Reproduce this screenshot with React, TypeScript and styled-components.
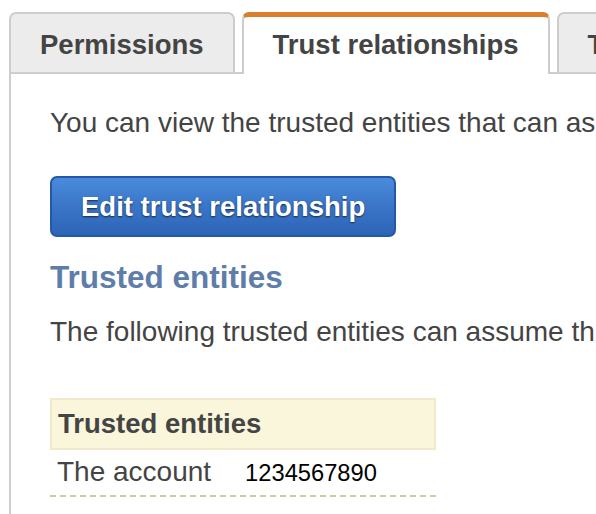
import React from 'react';
import styled, { createGlobalStyle, css } from 'styled-components';

const GlobalStyle = createGlobalStyle`
  html, body {
    margin: 0;
    padding: 0;
    background: #fff;
  }
  body {
    font-family: "Liberation Sans", Arial, Helvetica, sans-serif;
    color: #444;
  }
`;

const StyledPage = styled.div`
  display: flex;
  flex-direction: column;
  height: 100vh;
  padding: 12px 0 0 9px;
  box-sizing: border-box;
  overflow: hidden;
`;

const StyledTabBar = styled.div`
  display: flex;
  align-items: flex-start;
  gap: 7px;
  border-bottom: 2px solid #cdcdcd;
  white-space: nowrap;
`;

const StyledTab = styled.div<{ $active?: boolean }>`
  flex: none;
  box-sizing: border-box;
  height: 60px;
  padding: 17px 29px 0;
  border: 2px solid #cdcdcd;
  border-bottom: none;
  border-radius: 7px 7px 0 0;
  background: #ececec;
  font-size: 27.5px;
  line-height: 27.5px;
  font-weight: bold;
  color: #444;

  ${(props) => props.$active && css`
    position: relative;
    height: 62px;
    margin-bottom: -2px;
    padding-top: 14px;
    border-top: 5px solid #d97f2c;
    background: #fff;
  `}
`;

const StyledPanel = styled.div`
  flex: 1;
  border-left: 2px solid #cdcdcd;
  padding: 29px 0 0 39px;
  white-space: nowrap;
`;

const StyledText = styled.p<{ $gap?: number }>`
  margin: ${(props) => props.$gap ?? 0}px 0 0;
  font-size: 28px;
  line-height: 40px;
  color: #444;
`;

const StyledButton = styled.button`
  display: block;
  box-sizing: border-box;
  height: 61px;
  margin-top: 33px;
  padding: 0 29px;
  border: 2px solid #2459a8;
  border-radius: 7px;
  background: linear-gradient(to bottom, #4a8bdb 0%, #3a75c8 50%, #2d65b6 100%);
  font-family: "Liberation Sans", Arial, Helvetica, sans-serif;
  font-size: 27.5px;
  font-weight: bold;
  color: #fff;
  text-shadow: 0 1px 2px rgba(0, 0, 0, 0.65);
  cursor: pointer;
`;

const StyledHeading = styled.h2`
  margin: 20px 0 0;
  font-size: 31.5px;
  line-height: 40px;
  font-weight: bold;
  color: #5e7ea9;
`;

const StyledTable = styled.div`
  width: 386px;
  margin-top: 46px;
`;

const StyledTableHead = styled.div`
  box-sizing: border-box;
  height: 52px;
  padding: 0 6px;
  border: 2px solid #efeacb;
  background: #faf6dc;
  font-size: 27.5px;
  line-height: 48px;
  font-weight: bold;
  color: #444;
`;

const StyledRow = styled.div`
  display: flex;
  align-items: baseline;
  gap: 34px;
  height: 43px;
  padding: 2px 7px 0;
  border-bottom: 2px dashed #cccc9c;
`;

const StyledLabel = styled.span`
  font-size: 28px;
  line-height: 40px;
  color: #444;
`;

const StyledValue = styled.span`
  font-size: 23.7px;
  color: #000;
`;

const tabs = ['Permissions', 'Trust relationships', 'Tags', 'Access Advisor', 'Revoke sessions'];

const App = () => (
  <>
    <GlobalStyle />
    <StyledPage>
      <StyledTabBar>
        {tabs.map((tab) => (
          <StyledTab key={tab} $active={tab === 'Trust relationships'}>
            {tab}
          </StyledTab>
        ))}
      </StyledTabBar>
      <StyledPanel>
        <StyledText>
          You can view the trusted entities that can assume the role and the access conditions for the assume role policy.
        </StyledText>
        <StyledButton type="button">Edit trust relationship</StyledButton>
        <StyledHeading>Trusted entities</StyledHeading>
        <StyledText $gap={15}>
          The following trusted entities can assume this role.
        </StyledText>
        <StyledTable>
          <StyledTableHead>Trusted entities</StyledTableHead>
          <StyledRow>
            <StyledLabel>The account</StyledLabel>
            <StyledValue>1234567890</StyledValue>
          </StyledRow>
        </StyledTable>
      </StyledPanel>
    </StyledPage>
  </>
);

export default App;
